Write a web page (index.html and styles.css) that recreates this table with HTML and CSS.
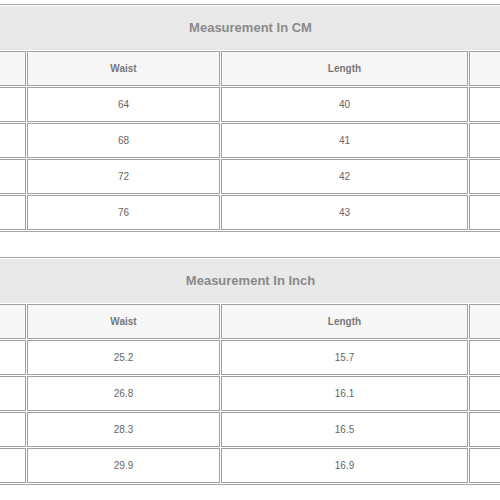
FILE: index.html
```html
<!DOCTYPE html>
<html>
<head>
<meta charset="utf-8">
<link rel="stylesheet" href="styles.css">
</head>
<body>
<div class="page">
  <div class="size-table">
    <div class="cell title">Measurement In CM</div>
    <div class="cell head"></div>
    <div class="cell head">Waist</div>
    <div class="cell head">Length</div>
    <div class="cell head"></div>
    <div class="cell"></div><div class="cell">64</div><div class="cell">40</div><div class="cell"></div>
    <div class="cell"></div><div class="cell">68</div><div class="cell">41</div><div class="cell"></div>
    <div class="cell"></div><div class="cell">72</div><div class="cell">42</div><div class="cell"></div>
    <div class="cell"></div><div class="cell">76</div><div class="cell">43</div><div class="cell"></div>
  </div>
  <div class="size-table">
    <div class="cell title">Measurement In Inch</div>
    <div class="cell head"></div>
    <div class="cell head">Waist</div>
    <div class="cell head">Length</div>
    <div class="cell head"></div>
    <div class="cell"></div><div class="cell">25.2</div><div class="cell">15.7</div><div class="cell"></div>
    <div class="cell"></div><div class="cell">26.8</div><div class="cell">16.1</div><div class="cell"></div>
    <div class="cell"></div><div class="cell">28.3</div><div class="cell">16.5</div><div class="cell"></div>
    <div class="cell"></div><div class="cell">29.9</div><div class="cell">16.9</div><div class="cell"></div>
  </div>
</div>
</body>
</html>
```
FILE: styles.css
```css
html, body {
  margin: 0;
  padding: 0;
  background: #ffffff;
}
.page {
  width: 500px;
  height: 500px;
  overflow: hidden;
  padding-top: 4px;
  box-sizing: border-box;
  font-family: "Liberation Sans", Arial, sans-serif;
}
.size-table {
  display: grid;
  grid-template-columns: 194px 193px 247px 200px;
  grid-template-rows: 44px repeat(5, 35px);
  gap: 1px;
  padding: 1px;
  border: 1px solid #a4a4a4;
  width: max-content;
  margin-left: -170px;
  margin-bottom: 25px;
}
.cell {
  box-sizing: border-box;
  border: 1px solid #a0a0a0;
  display: flex;
  align-items: center;
  justify-content: center;
  font-size: 10px;
  color: #666666;
  background: #ffffff;
}
.title {
  grid-column: 1 / -1;
  background: #e9e9e9;
  border-color: #e9e9e9;
  font-size: 13px;
  font-weight: bold;
  color: #8a8a8a;
  padding-bottom: 1px;
}
.head {
  background: #f7f7f7;
  font-weight: bold;
  color: #777777;
}
```
